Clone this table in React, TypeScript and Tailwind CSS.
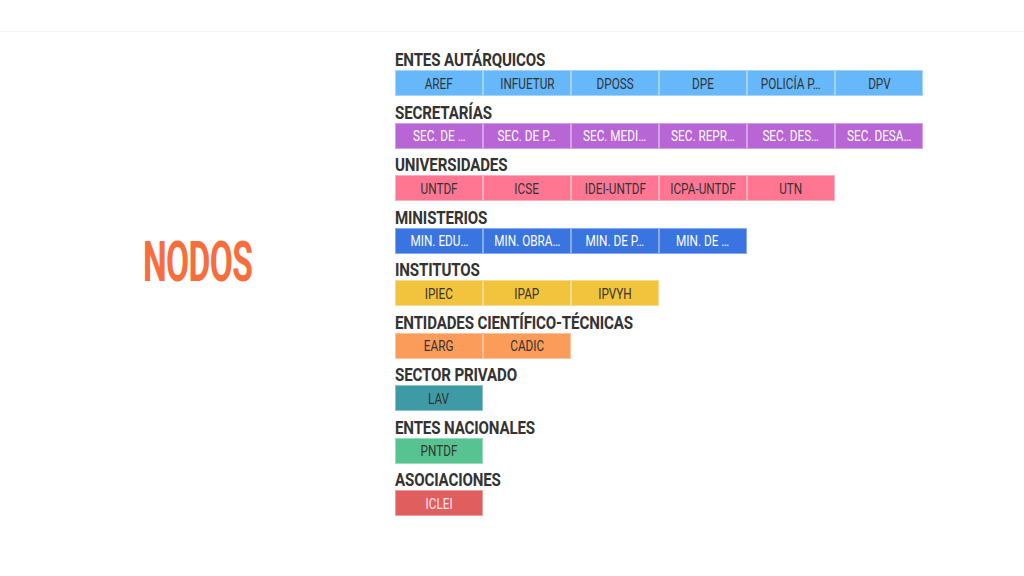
import React from "react";

type Group = {
  title: string;
  bg: string;
  text: string;
  items: string[];
};

// categories and their nodes, in display order
const groups: Group[] = [
  {
    title: "ENTES AUTÁRQUICOS",
    bg: "bg-[#66b8fb]",
    text: "text-[#333333]",
    items: ["AREF", "INFUETUR", "DPOSS", "DPE", "POLICÍA P…", "DPV"],
  },
  {
    title: "SECRETARÍAS",
    bg: "bg-[#b866d6]",
    text: "text-white",
    items: ["SEC. DE …", "SEC. DE P…", "SEC. MEDI…", "SEC. REPR…", "SEC. DES…", "SEC. DESA…"],
  },
  {
    title: "UNIVERSIDADES",
    bg: "bg-[#ff7693]",
    text: "text-[#333333]",
    items: ["UNTDF", "ICSE", "IDEI-UNTDF", "ICPA-UNTDF", "UTN"],
  },
  {
    title: "MINISTERIOS",
    bg: "bg-[#3a74e0]",
    text: "text-white",
    items: ["MIN. EDU…", "MIN. OBRA…", "MIN. DE P…", "MIN. DE …"],
  },
  {
    title: "INSTITUTOS",
    bg: "bg-[#f2c33c]",
    text: "text-[#333333]",
    items: ["IPIEC", "IPAP", "IPVYH"],
  },
  {
    title: "ENTIDADES CIENTÍFICO-TÉCNICAS",
    bg: "bg-[#fb9c5a]",
    text: "text-[#333333]",
    items: ["EARG", "CADIC"],
  },
  {
    title: "SECTOR PRIVADO",
    bg: "bg-[#3e9ba6]",
    text: "text-[#333333]",
    items: ["LAV"],
  },
  {
    title: "ENTES NACIONALES",
    bg: "bg-[#57c391]",
    text: "text-[#333333]",
    items: ["PNTDF"],
  },
  {
    title: "ASOCIACIONES",
    bg: "bg-[#e05e5e]",
    text: "text-[#ffe8ee]",
    items: ["ICLEI"],
  },
];

function GroupRow({ group }: { group: Group }) {
  return (
    <div className="flex flex-col mb-[6.5px]">
      <h3 className="h-5 text-[18px] leading-5 font-bold text-[#333333] whitespace-nowrap">
        {/* condensed look: Roboto squeezed horizontally */}
        <span className="inline-block tracking-[-0.01em] scale-x-[0.84] origin-left">{group.title}</span>
      </h3>
      <div className="flex">
        {group.items.map((item) => (
          <div
            key={item}
            className={`w-[88px] h-[26px] pt-[2px] flex items-center justify-center border border-white/40 ${group.bg} ${group.text} text-[14px] whitespace-nowrap overflow-hidden`}
          >
            <span className="inline-block scale-x-[0.84]">{item}</span>
          </div>
        ))}
      </div>
    </div>
  );
}

export default function App() {
  return (
    <div className="w-[1024px] h-[576px] bg-white overflow-hidden font-['Roboto',sans-serif]">
      {/* top bar */}
      <div className="h-[32px] border-b border-[#f3f3f3]" />

      <div className="flex">
        {/* title */}
        <div className="w-[395px] h-[460px] flex items-center pl-[143px]">
          <span className="inline-block text-[56px] leading-none font-bold text-[#f76d3e] tracking-[-0.02em] scale-x-[0.6] origin-left">
            NODOS
          </span>
        </div>

        {/* groups */}
        <div className="flex flex-col pt-[18px]">
          {groups.map((g) => (
            <GroupRow key={g.title} group={g} />
          ))}
        </div>
      </div>
    </div>
  );
}
